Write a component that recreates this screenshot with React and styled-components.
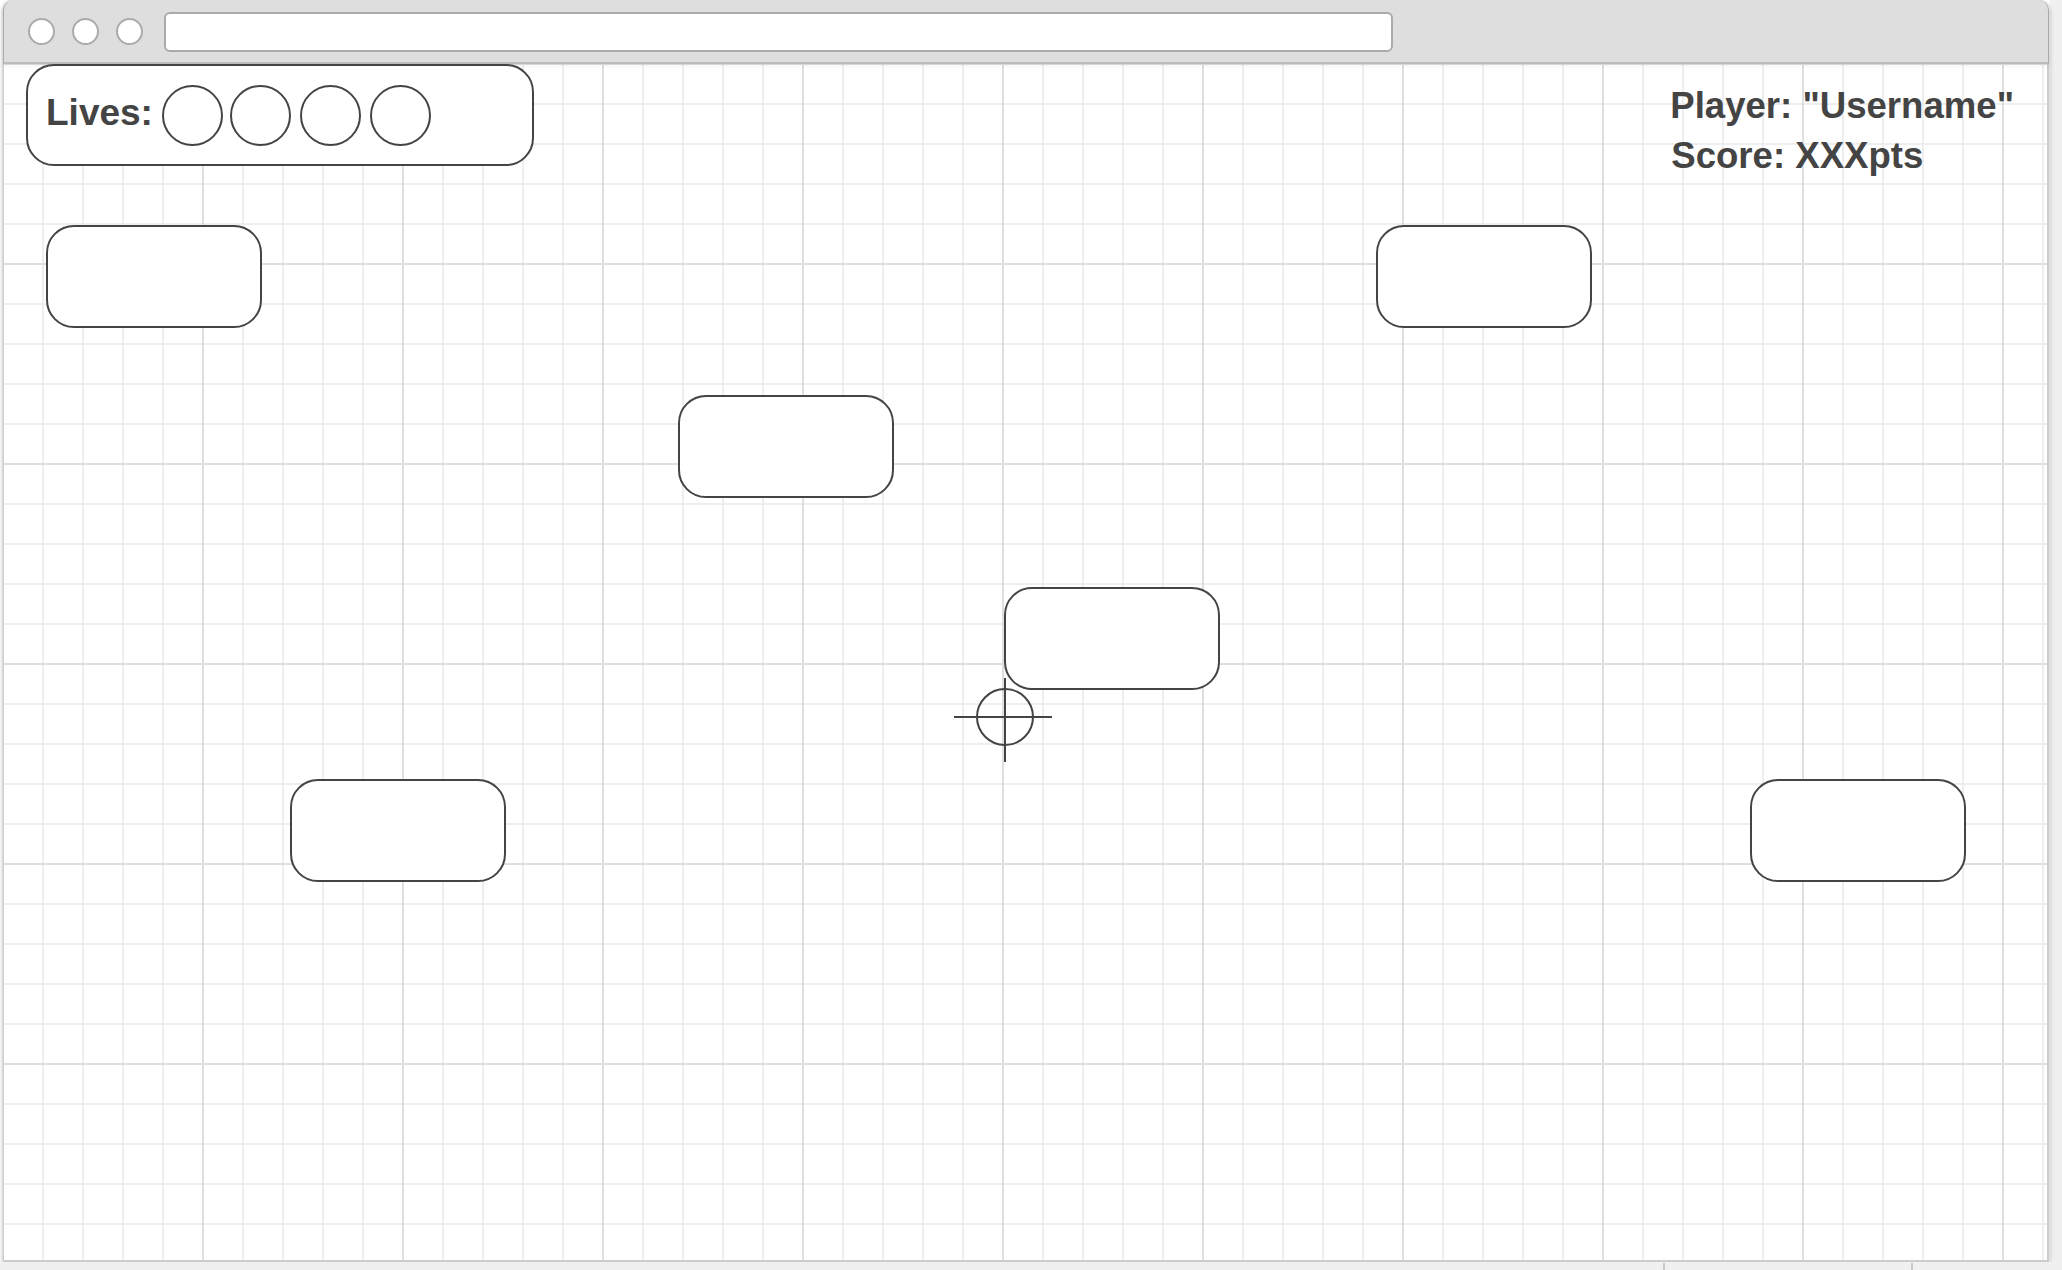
import React from 'react';
import styled, { createGlobalStyle } from 'styled-components';

const GlobalStyle = createGlobalStyle`
    html, body {
        margin: 0;
        padding: 0;
        background: #ffffff;
    }
    body {
        font-family: "Liberation Sans", Arial, sans-serif;
    }
`;

const Page = styled.div`
    width: 2062px;
    height: 1270px;
    overflow: hidden;
    display: flex;
    flex-direction: column;
    background: linear-gradient(to right, #ffffff 2049px, #f0f0f0 2051px);
`;

const BrowserWindow = styled.div`
    width: 2046px;
    height: 1262px;
    margin-left: 3px;
    flex: none;
    display: flex;
    flex-direction: column;
    box-shadow: 0 2px 5px rgba(0, 0, 0, 0.12), 2px 0 4px rgba(0, 0, 0, 0.08), -2px 0 2px rgba(0, 0, 0, 0.08);
    border-radius: 10px 10px 0 0;
`;

const TitleBar = styled.div`
    height: 64px;
    flex: none;
    box-sizing: border-box;
    display: flex;
    align-items: center;
    padding: 1px 0 0 24px;
    background: #dedede;
    border: 1px solid #aaaaaa;
    border-top: none;
    border-bottom: 2px solid #bbbbbb;
    border-radius: 10px 10px 0 0;
    position: relative;
    z-index: 1;
    box-shadow: 0 2px 5px rgba(0, 0, 0, 0.05);
`;

const WindowDot = styled.span`
    width: 27px;
    height: 27px;
    box-sizing: border-box;
    margin-right: 17px;
    border: 2px solid #aaaaaa;
    border-radius: 50%;
    background: #ffffff;
`;

const UrlBar = styled.div`
    width: 1229px;
    height: 40px;
    box-sizing: border-box;
    margin: 0 0 0 4px;
    border: 2px solid #aaaaaa;
    border-radius: 6px;
    background: #ffffff;
`;

const Canvas = styled.div`
    flex: 1;
    position: relative;
    box-sizing: border-box;
    border: solid #cccccc;
    border-width: 0 2px 2px 1px;
    background-color: #ffffff;
    background-image:
        linear-gradient(to right, #dfdfdf 2px, transparent 2px),
        linear-gradient(to bottom, #dfdfdf 2px, transparent 2px),
        linear-gradient(to right, #eeeeee 2px, transparent 2px),
        linear-gradient(to bottom, #eeeeee 2px, transparent 2px);
    background-size: 200px 200px, 200px 200px, 40px 40px, 40px 40px;
    background-position: -2px 0, 0 -1px, -2px 0, 0 -1px;
    background-origin: padding-box;
`;

const Hud = styled.div`
    display: flex;
    justify-content: space-between;
    align-items: flex-start;
    padding: 0 33px 0 22px;
`;

const LivesBox = styled.div`
    position: relative;
    z-index: 2;
    width: 508px;
    height: 102px;
    box-sizing: border-box;
    display: flex;
    align-items: center;
    gap: 9px;
    padding-left: 18px;
    background: #ffffff;
    border: 2px solid #444444;
    border-radius: 28px;
`;

const HudText = styled.div`
    font-size: 36.6px;
    font-weight: 700;
    line-height: 50px;
    color: #444444;
`;

const LivesLabel = styled(HudText)`
    font-size: 37px;
    margin: 0 0 4px 0;
`;

const Life = styled.span`
    width: 61px;
    height: 61px;
    box-sizing: border-box;
    border: 2px solid #444444;
    border-radius: 50%;
    margin-right: ${(p) => (p.$tight ? '-2px' : '0')};
`;

const PlayerInfo = styled.div`
    padding-top: 17px;
`;

const ScoreLine = styled(HudText)`
    margin-left: 1px;
`;

const Target = styled.div`
    position: absolute;
    left: ${(p) => p.$x}px;
    top: ${(p) => p.$y}px;
    width: 216px;
    height: 103px;
    box-sizing: border-box;
    background: #ffffff;
    border: 2px solid #444444;
    border-radius: 28px;
`;

const CrosshairIcon = styled.svg`
    position: absolute;
    left: 950px;
    top: 612px;
    width: 100px;
    height: 88px;
`;

const BottomStrip = styled.div`
    flex: 1;
    position: relative;
    background: #f0f0f0;
`;

const StripTick = styled.span`
    position: absolute;
    left: ${(p) => p.$x}px;
    top: 1px;
    bottom: 0;
    width: 2px;
    background: #c8c8c8;
`;

const targets = [
    [42, 161],
    [1372, 161],
    [674, 331],
    [1000, 523],
    [286, 715],
    [1746, 715],
];

const App = () => (
    <Page>
        <GlobalStyle />
        <BrowserWindow>
            <TitleBar>
                <WindowDot />
                <WindowDot />
                <WindowDot />
                <UrlBar />
            </TitleBar>
            <Canvas>
                <Hud>
                    <LivesBox>
                        <LivesLabel>Lives:</LivesLabel>
                        <Life $tight />
                        <Life />
                        <Life />
                        <Life />
                    </LivesBox>
                    <PlayerInfo>
                        <HudText>Player: "Username"</HudText>
                        <ScoreLine>Score: XXXpts</ScoreLine>
                    </PlayerInfo>
                </Hud>
                {targets.map(([x, y]) => (
                    <Target key={`${x}-${y}`} $x={x} $y={y} />
                ))}
                <CrosshairIcon viewBox="0 0 100 88" fill="none" stroke="#444444" strokeWidth="2">
                    <circle cx="51" cy="41" r="28" />
                    <path d="M0 41H98M51 2V86" />
                </CrosshairIcon>
            </Canvas>
        </BrowserWindow>
        <BottomStrip>
            <StripTick $x={1663} />
            <StripTick $x={1911} />
        </BottomStrip>
    </Page>
);

export default App;
